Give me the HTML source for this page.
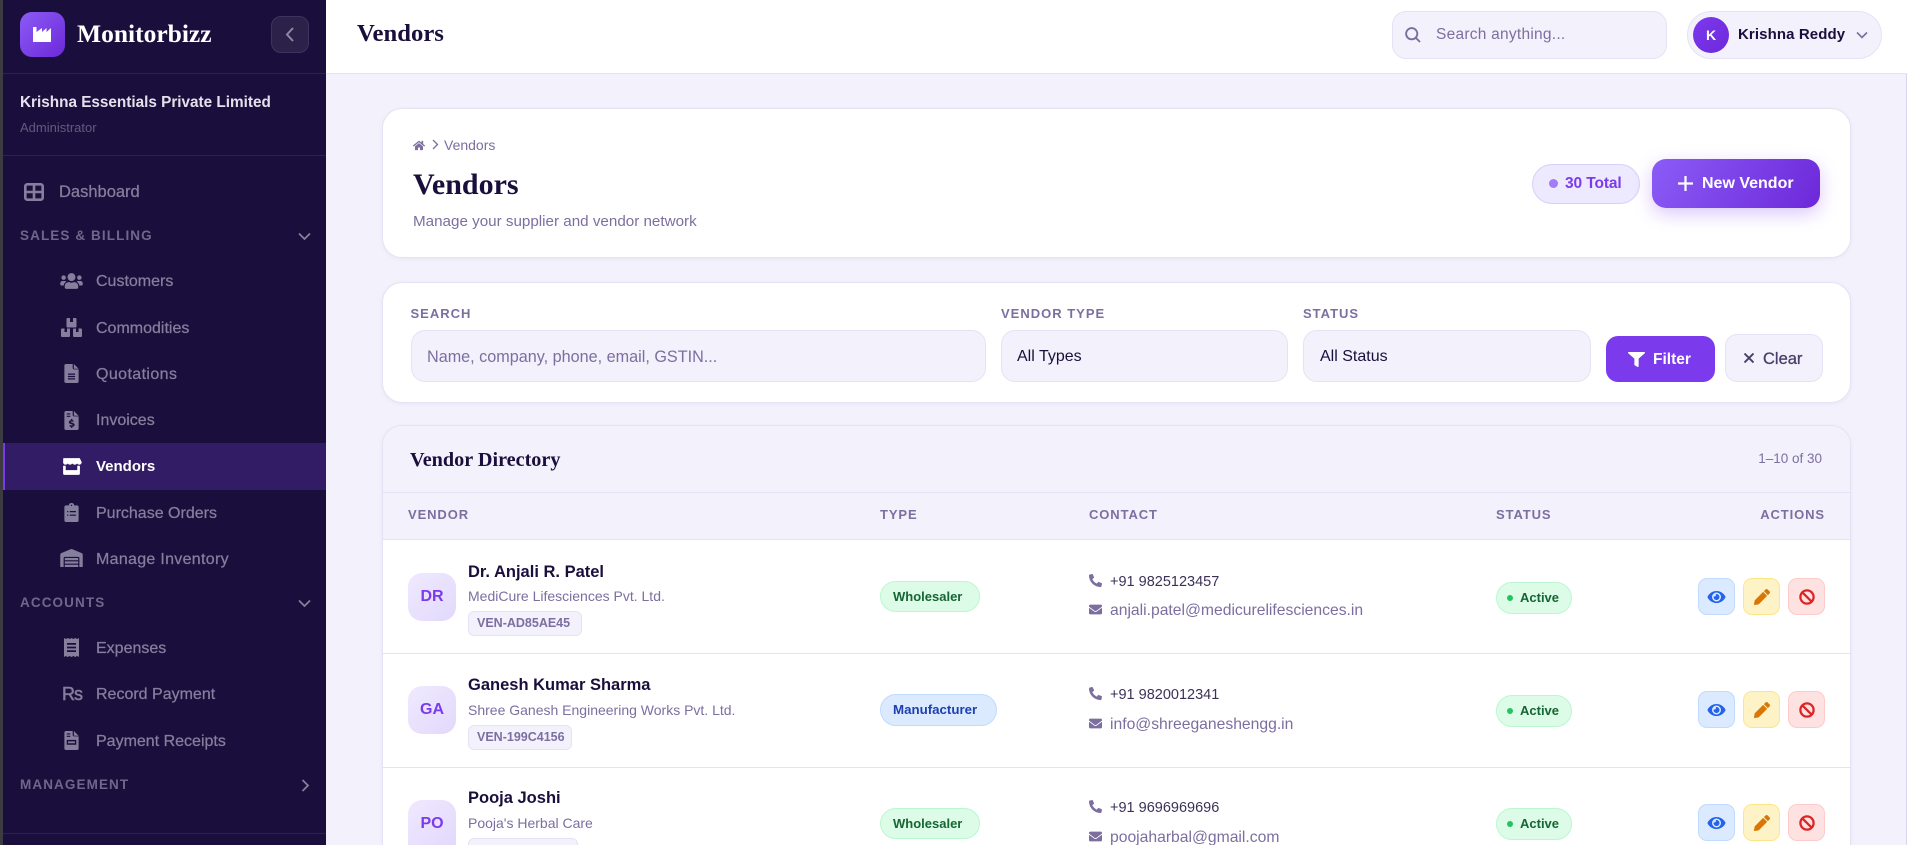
<!DOCTYPE html>
<html lang="en"><head><meta charset="utf-8"><title>Vendors</title>
<style>
*{box-sizing:border-box;margin:0;padding:0}
html,body{width:1907px;height:845px;overflow:hidden;background:#f3f1fb;font-family:"Liberation Sans",sans-serif;color:#1a0f3c}
#root{position:relative;width:1907px;height:845px;overflow:hidden;background:#f3f1fb}
.a{position:absolute}
.t{position:absolute;white-space:nowrap;line-height:20px;height:20px}
.s{font-family:"Liberation Serif",serif;font-weight:700;color:#1a0f3c}
.b{font-weight:700}
svg{position:absolute;display:block;fill:currentColor}
#side{position:absolute;left:0;top:0;width:326px;height:845px;background:#1a0f3c;overflow:hidden}
#edge{position:absolute;left:0;top:0;width:3px;height:845px;background:#3c3b40}
.hr{position:absolute;left:3px;width:323px;height:1px;background:#2c2250}
.nav{color:#857e9c;font-size:16px;left:96px;-webkit-text-stroke:.25px #857e9c}
.ic{color:#857e9c}
.sec{color:#6f678b;font-size:13.5px;font-weight:700;letter-spacing:1.1px;left:20px}
.card{position:absolute;left:382px;width:1469px;background:#fff;border:1px solid #e6e2f5;border-radius:20px;box-shadow:0 1px 4px rgba(90,70,170,.06)}
.lab{color:#7c6fa0;font-size:13px;font-weight:700;letter-spacing:1px}
.inp{position:absolute;top:330px;height:52px;background:#f3f1fb;border:1px solid #e6e2f5;border-radius:14px}
.av{position:absolute;left:408px;width:48px;height:48px;border-radius:14px;background:linear-gradient(135deg,#efe9fe,#e2d9fc);color:#7c3aed;font-weight:700;font-size:16px;text-align:center;line-height:48px}
.name{left:468px;font-size:16.5px;font-weight:700;color:#1a0f3c}
.co{left:468px;font-size:14px;color:#7c6fa0}
.code{position:absolute;left:468px;height:25px;background:#f3f1fb;border:1px solid #e6e2f5;border-radius:6px;color:#7c6fa0;font-size:12.5px;font-weight:700;line-height:23px;padding-left:8px;white-space:nowrap}
.pill{position:absolute;left:880px;height:31px;border-radius:16px;font-size:13px;line-height:29px;font-weight:700;white-space:nowrap;padding-left:12px}
.g{background:#dcfce7;border:1px solid #bbf7d0;color:#166534}
.bl{background:#dbeafe;border:1px solid #bfdbfe;color:#1e40af;font-size:13.3px}
.ph{left:1110px;font-size:14.5px;color:#3b3158}
.em{left:1110px;font-size:15.7px;color:#7c6fa0}
.ci{color:#7c6fa0}
.st{position:absolute;left:1496px;width:76px;height:32px;border-radius:16px;background:#dcfce7;border:1px solid #bbf7d0;color:#166534;font-size:13px;font-weight:700;line-height:30px;padding-left:23px}
.st:before{content:"";position:absolute;left:10px;top:12px;width:6px;height:6px;border-radius:50%;background:#22c55e}
.ab{position:absolute;width:37px;height:37px;border-radius:9px}
.v{left:1698px;background:#dbeafe;border:1px solid #bfdbfe;color:#2563eb}
.e{left:1743px;background:#fef3c7;border:1px solid #fde68a;color:#d97706}
.d{left:1788px;background:#fee2e2;border:1px solid #fecaca;color:#dc2626}
.th{color:#7c6fa0;font-size:13px;font-weight:700;letter-spacing:.9px;top:505px}
</style></head><body><div id="root">

<div id="side"></div><div id="edge"></div>
<div class="a" style="left:20px;top:12px;width:45px;height:45px;border-radius:12px;background:linear-gradient(135deg,#8b5cf6,#6d28d9)"></div>
<svg style="left:33px;top:26px;color:#fff" width="18" height="16" viewBox="0 0 18 16"><path d="M0 16V1h3.5v5L9 2v4l4.5-4v4L18 2v14z"/></svg>
<div class="t s" style="left:77px;top:24px;font-size:25.5px;color:#fff">Monitorbizz</div>
<div class="a" style="left:271px;top:16px;width:38px;height:37px;border-radius:10px;background:#2b2149;border:1px solid #3d3360"></div>
<svg style="left:284px;top:27px;fill:none;stroke:#8e87a5;stroke-width:2" width="12" height="15" viewBox="0 0 12 15"><path d="M9 1L3 7.5 9 14"/></svg>
<div class="hr" style="top:73px"></div>
<div class="t b" style="left:20px;top:92.500px;font-size:15.300px;color:#e4e1ec">Krishna Essentials Private Limited</div>
<div class="t" style="left:20px;top:118px;font-size:13px;color:#625a7e">Administrator</div>
<div class="hr" style="top:155px"></div>

<svg class="ic" style="left:24px;top:183px;fill:none;stroke:#857e9c;stroke-width:2.600" width="20" height="18" viewBox="0 0 20 18"><rect x="1.300" y="1.300" width="17.400" height="15.400" rx="2"/><path d="M1 9h18M10 1v16"/></svg>
<div class="t nav" style="left:59px;top:182px;font-size:16.5px">Dashboard</div>
<div class="t sec" style="top:226px">SALES &amp; BILLING</div>
<svg style="left:298px;top:232px;fill:none;stroke:#857e9c;stroke-width:1.8" width="13" height="9" viewBox="0 0 13 9"><path d="M1 1.500l5.500 5.500L12 1.500"/></svg>

<svg class="ic" style="left:60px;top:272px" width="23" height="18" viewBox="0 0 640 512"><path d="M96 224c35.3 0 64-28.7 64-64s-28.7-64-64-64-64 28.7-64 64 28.7 64 64 64zm448 0c35.3 0 64-28.7 64-64s-28.7-64-64-64-64 28.7-64 64 28.7 64 64 64zm32 32h-64c-17.6 0-33.5 7.1-45.1 18.6 40.3 22.1 68.9 62 75.1 109.4h66c17.7 0 32-14.3 32-32v-32c0-35.3-28.7-64-64-64zm-256 0c61.9 0 112-50.1 112-112S381.9 32 320 32 208 82.1 208 144s50.1 112 112 112zm76.8 32h-8.3c-20.8 10-43.9 16-68.5 16s-47.6-6-68.5-16h-8.3C179.6 288 128 339.6 128 403.2V432c0 26.5 21.5 48 48 48h288c26.5 0 48-21.5 48-48v-28.8c0-63.6-51.6-115.2-115.2-115.2zm-223.7-13.4C161.5 263.1 145.6 256 128 256H64c-35.3 0-64 28.7-64 64v32c0 17.7 14.3 32 32 32h65.9c6.3-47.4 34.9-87.3 75.2-109.4z"/></svg>
<div class="t nav" style="top:272px">Customers</div>

<svg class="ic" style="left:61px;top:318px" width="21" height="19" viewBox="0 0 21 19"><path fill-rule="evenodd" d="M6.500 0h8a1 1 0 0 1 1 1v7.500a1 1 0 0 1-1 1h-8a1 1 0 0 1-1-1V1a1 1 0 0 1 1-1zM9 0v4h3V0zM1 10.500h8v7.500a1 1 0 0 1-1 1H1a1 1 0 0 1-1-1v-6.500a1 1 0 0 1 1-1zM3.500 10.500v3.500h2.500v-3.500zM13 10.500h7a1 1 0 0 1 1 1V18a1 1 0 0 1-1 1h-7a1 1 0 0 1-1-1v-6.500a1 1 0 0 1 1-1zM15 10.500v3.500h2.500v-3.500z"/></svg>
<div class="t nav" style="top:319px">Commodities</div>

<svg class="ic" style="left:64px;top:364px" width="15" height="19" viewBox="0 0 384 512"><path fill-rule="evenodd" d="M48 0h176v112a32 32 0 0 0 32 32h128v320a48 48 0 0 1-48 48H48a48 48 0 0 1-48-48V48A48 48 0 0 1 48 0zM256 0l128 128H256zM96 256h192v32H96zM96 320h192v32H96zM96 384h192v32H96z"/></svg>
<div class="t nav" style="top:365px;letter-spacing:.4px">Quotations</div>

<svg class="ic" style="left:64px;top:411px" width="15" height="19" viewBox="0 0 384 512"><path fill-rule="evenodd" d="M48 0h176v112a32 32 0 0 0 32 32h128v320a48 48 0 0 1-48 48H48a48 48 0 0 1-48-48V48A48 48 0 0 1 48 0zM256 0l128 128H256zM64 64v30h96V64zM64 128v30h96v-30zM176 216v32c-40 8-56 26-56 52 0 30 24 44 70 56 28 8 36 14 36 22 0 12-40 14-84 0v36c18 8 30 10 34 12v30h40v-30c40-6 60-24 60-52 0-32-24-46-68-58-30-8-38-14-38-22 0-10 30-14 76-2v-36c-14-4-24-6-30-8v-32z"/></svg>
<div class="t nav" style="top:411px">Invoices</div>

<div class="a" style="left:3px;top:443px;width:323px;height:47px;background:#321c66"></div>
<div class="a" style="left:3px;top:443px;width:2px;height:47px;background:#7c3aed"></div>
<svg style="left:61px;top:457px;color:#fff" width="21" height="19" viewBox="0 0 640 512"><path d="M70 0h500l60 120c4 50-30 80-70 80-30 0-55-14-70-36-15 22-40 36-70 36s-55-14-76-36c-16 22-42 36-70 36s-55-14-70-36c-15 22-40 36-70 36-40 0-70-30-70-80z"/><path d="M64 232h80v136h352V232h80v232a48 48 0 0 1-48 48H112a48 48 0 0 1-48-48z"/></svg>
<div class="t nav" style="top:457px;color:#fff;font-weight:700;font-size:15px;-webkit-text-stroke:0">Vendors</div>

<svg class="ic" style="left:64px;top:503px" width="15" height="19" viewBox="0 0 384 512"><path fill-rule="evenodd" d="M120 64C120 28 150 0 192 0s72 28 72 64h72a48 48 0 0 1 48 48v352a48 48 0 0 1-48 48H48a48 48 0 0 1-48-48V112a48 48 0 0 1 48-48zM176 48v32h32V48zM72 216v32h32v-32zM144 216v32h168v-32zM72 312v32h32v-32zM144 312v32h168v-32z"/></svg>
<div class="t nav" style="top:504px">Purchase Orders</div>

<svg class="ic" style="left:60px;top:549px" width="23" height="18" viewBox="0 0 640 512"><path d="M504 352H136.4c-4.4 0-8 3.6-8 8l-.1 48c0 4.4 3.6 8 8 8H504c4.4 0 8-3.6 8-8v-48c0-4.4-3.6-8-8-8zm0 96H136.1c-4.4 0-8 3.6-8 8l-.1 48c0 4.4 3.6 8 8 8h368c4.4 0 8-3.6 8-8v-48c0-4.4-3.6-8-8-8zm0-192H136.6c-4.4 0-8 3.6-8 8l-.1 48c0 4.4 3.6 8 8 8H504c4.4 0 8-3.6 8-8v-48c0-4.4-3.6-8-8-8zm106.5-139L338.4 3.7a48.15 48.15 0 0 0-36.9 0L29.5 117C11.7 124.5 0 141.9 0 161.3V504c0 4.4 3.6 8 8 8h80c4.4 0 8-3.6 8-8V256c0-17.6 14.6-32 32.6-32h382.8c18 0 32.6 14.4 32.6 32v248c0 4.4 3.6 8 8 8h80c4.4 0 8-3.6 8-8V161.3c0-19.4-11.7-36.8-29.5-44.3z"/></svg>
<div class="t nav" style="top:550px;letter-spacing:.3px">Manage Inventory</div>

<div class="t sec" style="top:593px">ACCOUNTS</div>
<svg style="left:298px;top:599px;fill:none;stroke:#857e9c;stroke-width:1.8" width="13" height="9" viewBox="0 0 13 9"><path d="M1 1.500l5.500 5.500L12 1.500"/></svg>

<svg class="ic" style="left:64px;top:638px" width="15" height="19" viewBox="0 0 15 19"><path fill-rule="evenodd" d="M0 0l1.900 1 1.900-1 1.900 1L7.500 0l1.900 1 1.900-1 1.900 1L15 0v19l-1.900-1-1.900 1-1.900-1-1.900 1-1.900-1-1.900 1-1.900-1L0 19zM3 5v1.800h9V5zM3 8.600v1.800h9V8.600zM3 12.200V14h9v-1.800z"/></svg>
<div class="t nav" style="top:639px">Expenses</div>

<div class="t" style="left:62px;top:684px;font-size:18px;letter-spacing:-1px;color:#857e9c;-webkit-text-stroke:.5px #857e9c">Rs</div>
<div class="t nav" style="top:685px">Record Payment</div>

<svg class="ic" style="left:64px;top:731px" width="15" height="19" viewBox="0 0 384 512"><path fill-rule="evenodd" d="M48 0h176v112a32 32 0 0 0 32 32h128v320a48 48 0 0 1-48 48H48a48 48 0 0 1-48-48V48A48 48 0 0 1 48 0zM256 0l128 128H256zM64 64v30h96V64zM64 128v30h96v-30zM64 240v130h256V240zM100 280h184v50H100z"/></svg>
<div class="t nav" style="top:732px">Payment Receipts</div>

<div class="t sec" style="top:775px">MANAGEMENT</div>
<svg style="left:301px;top:779px;fill:none;stroke:#857e9c;stroke-width:1.8" width="9" height="13" viewBox="0 0 9 13"><path d="M1.500 1L7 6.500 1.500 12"/></svg>
<div class="hr" style="top:833px"></div>

<!-- top bar -->
<div class="a" style="left:326px;top:0;width:1581px;height:74px;background:#fff;border-bottom:1px solid #e6e2f5"></div>
<div class="a" style="left:1906px;top:74px;width:1px;height:771px;background:#d9d4f0"></div>
<div class="t s" style="left:357px;top:24px;font-size:24.700px">Vendors</div>
<div class="a" style="left:1392px;top:11px;width:275px;height:48px;background:#f3f1fb;border:1px solid #e6e2f5;border-radius:14px"></div>
<svg style="left:1405px;top:27px;fill:none;stroke:#7c6fa0;stroke-width:1.9" width="16" height="16" viewBox="0 0 16 16"><circle cx="6.700" cy="6.700" r="5.600"/><path d="M10.800 10.800L15 15"/></svg>
<div class="t" style="left:1436px;top:24.500px;font-size:15.500px;letter-spacing:.25px;color:#7c6fa0">Search anything...</div>
<div class="a" style="left:1687px;top:11px;width:195px;height:48px;background:#f3f1fb;border:1px solid #e6e2f5;border-radius:24px"></div>
<div class="a" style="left:1693px;top:17px;width:36px;height:36px;border-radius:50%;background:linear-gradient(135deg,#7c3aed,#6d28d9);color:#fff;text-align:center;line-height:36px;font-size:14px;font-weight:700">K</div>
<div class="t b" style="left:1738px;top:24.500px;font-size:15px;letter-spacing:.1px;color:#1a0f3c">Krishna Reddy</div>
<svg style="left:1856px;top:31px;fill:none;stroke:#7c6fa0;stroke-width:1.600" width="12" height="8" viewBox="0 0 12 8"><path d="M1 1.500l5 5 5-5"/></svg>

<!-- header card -->
<div class="card" style="top:108px;height:150px"></div>
<svg style="left:413px;top:140px;color:#7c6fa0" width="12" height="11" viewBox="0 0 576 512"><path d="M280.37 148.26L96 300.11V464a16 16 0 0 0 16 16l112.06-.29a16 16 0 0 0 15.92-16V368a16 16 0 0 1 16-16h64a16 16 0 0 1 16 16v95.64a16 16 0 0 0 16 16.05L464 480a16 16 0 0 0 16-16V300L295.67 148.26a12.19 12.19 0 0 0-15.3 0zM571.6 251.47L488 182.56V44.05a12 12 0 0 0-12-12h-56a12 12 0 0 0-12 12v72.61L318.47 43a48 48 0 0 0-61 0L4.34 251.47a12 12 0 0 0-1.6 16.9l25.5 31A12 12 0 0 0 45.15 301l235.22-193.74a12.19 12.19 0 0 1 15.3 0L530.9 301a12 12 0 0 0 16.9-1.6l25.5-31a12 12 0 0 0-1.7-16.93z"/></svg>
<svg style="left:432px;top:139px;fill:none;stroke:#7c6fa0;stroke-width:1.300" width="7" height="11" viewBox="0 0 7 11"><path d="M1 1l4.500 4.500L1 10"/></svg>
<div class="t" style="left:444px;top:135px;font-size:14px;color:#7c6fa0">Vendors</div>
<div class="t s" style="left:413px;top:175px;font-size:30px">Vendors</div>
<div class="t" style="left:413px;top:211.500px;font-size:15.200px;color:#7c6fa0">Manage your supplier and vendor network</div>

<div class="a" style="left:1532px;top:164px;width:108px;height:40px;border-radius:20px;background:#ede9fe;border:1px solid #d9cffb"></div>
<div class="a" style="left:1549px;top:179px;width:9px;height:9px;border-radius:50%;background:#a27cf5"></div>
<div class="t b" style="left:1565px;top:174px;font-size:15.500px;letter-spacing:-.1px;color:#7c3aed">30 Total</div>
<div class="a" style="left:1652px;top:159px;width:168px;height:49px;border-radius:14px;background:linear-gradient(120deg,#8b5cf6,#6d28d9);box-shadow:0 6px 18px rgba(124,58,237,.28)"></div>
<svg style="left:1678px;top:176px;fill:none;stroke:#fff;stroke-width:2.200" width="15" height="15" viewBox="0 0 15 15"><path d="M7.500 0v15M0 7.500h15"/></svg>
<div class="t b" style="left:1702px;top:173.500px;font-size:16px;color:#fff">New Vendor</div>

<!-- filter card -->
<div class="card" style="top:282px;height:121px"></div>
<div class="t lab" style="left:410.500px;top:304px">SEARCH</div>
<div class="inp" style="left:411px;width:575px"></div>
<div class="t" style="left:427px;top:347px;font-size:16.200px;color:#7c6fa0">Name, company, phone, email, GSTIN...</div>
<div class="t lab" style="left:1001px;top:304px">VENDOR TYPE</div>
<div class="inp" style="left:1001px;width:287px"></div>
<div class="t" style="left:1017px;top:347px;font-size:16px;color:#1a0f3c">All Types</div>
<div class="t lab" style="left:1303px;top:304px">STATUS</div>
<div class="inp" style="left:1303px;width:288px"></div>
<div class="t" style="left:1320px;top:347px;font-size:16px;color:#1a0f3c">All Status</div>
<div class="a" style="left:1606px;top:336px;width:109px;height:46px;border-radius:12px;background:#7c3aed"></div>
<svg style="left:1628px;top:352px;color:#fff" width="17" height="15" viewBox="0 0 512 512" preserveAspectRatio="none"><path d="M487.976 0H24.028C2.71 0-8.047 25.866 7.058 40.971L192 225.941V432c0 7.831 3.821 15.17 10.237 19.662l80 55.98C298.02 518.69 320 507.493 320 487.98V225.941l184.947-184.97C520.021 25.896 509.338 0 487.976 0z"/></svg>
<div class="t b" style="left:1653px;top:349.500px;font-size:15.500px;color:#fff">Filter</div>
<div class="a" style="left:1725px;top:334px;width:98px;height:48px;border-radius:12px;background:#f3f1fb;border:1px solid #e6e2f5"></div>
<svg style="left:1744px;top:353px;fill:none;stroke:#4a3f6b;stroke-width:1.900" width="10" height="10" viewBox="0 0 10 10"><path d="M.5.5l9 9M9.500.5l-9 9"/></svg>
<div class="t" style="left:1763px;top:348.500px;font-size:16.500px;color:#4a3f6b;-webkit-text-stroke:.3px #4a3f6b">Clear</div>

<!-- table card -->
<div class="card" style="top:425px;height:420px;overflow:hidden;border-radius:20px 20px 0 0;border-bottom:0">
  <div class="a" style="left:0;top:0;width:100%;height:114px;background:#f3f1fb;border-bottom:1px solid #e6e2f5"></div>
  <div class="a" style="left:0;top:66px;width:100%;height:1px;background:#e6e2f5"></div>
  <div class="a" style="left:0;top:227px;width:100%;height:1px;background:#e6e2f5"></div>
  <div class="a" style="left:0;top:341px;width:100%;height:1px;background:#e6e2f5"></div>
</div>
<div class="t s" style="left:410px;top:450px;font-size:20.200px">Vendor Directory</div>
<div class="t" style="right:85px;top:449px;font-size:13.500px;color:#7c6fa0">1–10 of 30</div>
<div class="t th" style="left:408px">VENDOR</div>
<div class="t th" style="left:880px">TYPE</div>
<div class="t th" style="left:1089px">CONTACT</div>
<div class="t th" style="left:1496px">STATUS</div>
<div class="t th" style="right:82px">ACTIONS</div>

<!-- row 1 -->
<div class="av" style="top:573px">DR</div>
<div class="t name" style="top:561.500px">Dr. Anjali R. Patel</div>
<div class="t co" style="top:586px">MediCure Lifesciences Pvt. Ltd.</div>
<div class="code" style="top:611px;width:114px">VEN-AD85AE45</div>
<div class="pill g" style="top:581px;width:100px">Wholesaler</div>
<svg class="ci" style="left:1089px;top:574px;transform:scaleX(-1)" width="13" height="13" viewBox="0 0 512 512"><path d="M493.4 24.6l-104-24c-11.3-2.6-22.9 3.3-27.5 13.9l-48 112c-4.2 9.8-1.4 21.3 6.9 28l60.6 49.6c-36 76.700-98.900 140.500-177.200 177.200l-49.600-60.600c-6.800-8.300-18.200-11.100-28-6.900l-112 48C3.900 366.500-2 378.100.6 389.400l24 104C27.100 504.200 36.700 512 48 512c256.100 0 464-207.500 464-464 0-11.200-7.700-20.900-18.600-23.400z"/></svg>
<div class="t ph" style="top:572px">+91 9825123457</div>
<svg class="ci" style="left:1089px;top:603px" width="13" height="13" viewBox="0 0 512 512"><path d="M502.300 190.800c3.900-3.100 9.700-.2 9.700 4.700V400c0 26.500-21.500 48-48 48H48c-26.500 0-48-21.500-48-48V195.600c0-5 5.700-7.800 9.700-4.700 22.400 17.400 52.100 39.500 154.100 113.600 21.100 15.400 56.700 47.800 92.200 47.600 35.700.3 72-32.800 92.300-47.600 102-74.100 131.600-96.300 154-113.700zM256 320c23.200.4 56.600-29.200 73.400-41.400 132.700-96.300 142.800-104.700 173.400-128.700 5.800-4.500 9.200-11.500 9.200-18.900v-19c0-26.500-21.500-48-48-48H48C21.500 64 0 85.500 0 112v19c0 7.400 3.400 14.300 9.200 18.900 30.600 23.900 40.700 32.400 173.400 128.700 16.800 12.200 50.200 41.800 73.400 41.400z"/></svg>
<div class="t em" style="top:601px">anjali.patel@medicurelifesciences.in</div>
<div class="st" style="top:582px">Active</div>
<div class="ab v" style="top:578px"><svg style="left:8px;top:10px" width="19" height="16" viewBox="0 0 576 512"><path d="M572.520 241.400C518.290 135.590 410.930 64 288 64S57.680 135.640 3.480 241.410a32.350 32.350 0 0 0 0 29.190C57.710 376.410 165.070 448 288 448s230.320-71.640 284.520-177.410a32.350 32.350 0 0 0 0-29.190zM288 400a144 144 0 1 1 144-144 143.930 143.930 0 0 1-144 144zm0-240a95.310 95.310 0 0 0-25.310 3.790 47.850 47.850 0 0 1-66.900 66.900A95.780 95.780 0 1 0 288 160z"/></svg></div>
<div class="ab e" style="top:578px"><svg style="left:10px;top:10px" width="16" height="16" viewBox="0 0 512 512"><path d="M497.900 142.100l-46.100 46.100c-4.700 4.700-12.300 4.700-17 0l-111-111c-4.700-4.700-4.700-12.300 0-17l46.100-46.100c18.700-18.700 49.100-18.700 67.900 0l60.100 60.100c18.800 18.700 18.800 49.100 0 67.900zM284.200 99.800L21.600 362.400.4 483.900c-2.900 16.400 11.400 30.600 27.800 27.800l121.500-21.300 262.600-262.600c4.700-4.700 4.700-12.300 0-17l-111-111c-4.800-4.700-12.400-4.700-17.100 0z"/></svg></div>
<div class="ab d" style="top:578px"><svg style="left:10px;top:10px;fill:none;stroke:currentColor;stroke-width:2.300" width="16" height="16" viewBox="0 0 16 16"><circle cx="8" cy="8" r="6.600"/><path d="M3.400 3.400l9.200 9.200"/></svg></div>

<!-- row 2 -->
<div class="av" style="top:686px">GA</div>
<div class="t name" style="top:674.500px">Ganesh Kumar Sharma</div>
<div class="t co" style="top:700px">Shree Ganesh Engineering Works Pvt. Ltd.</div>
<div class="code" style="top:725px;width:104px">VEN-199C4156</div>
<div class="pill bl" style="top:694px;width:117px;height:32px;line-height:30px">Manufacturer</div>
<svg class="ci" style="left:1089px;top:687px;transform:scaleX(-1)" width="13" height="13" viewBox="0 0 512 512"><path d="M493.4 24.6l-104-24c-11.3-2.6-22.9 3.3-27.5 13.9l-48 112c-4.2 9.8-1.4 21.3 6.9 28l60.6 49.6c-36 76.700-98.900 140.500-177.200 177.200l-49.600-60.600c-6.800-8.300-18.200-11.100-28-6.900l-112 48C3.900 366.500-2 378.100.6 389.400l24 104C27.100 504.200 36.700 512 48 512c256.100 0 464-207.500 464-464 0-11.200-7.700-20.900-18.600-23.400z"/></svg>
<div class="t ph" style="top:685px">+91 9820012341</div>
<svg class="ci" style="left:1089px;top:717px" width="13" height="13" viewBox="0 0 512 512"><path d="M502.300 190.800c3.900-3.100 9.700-.2 9.700 4.700V400c0 26.500-21.500 48-48 48H48c-26.500 0-48-21.500-48-48V195.600c0-5 5.700-7.800 9.700-4.700 22.400 17.400 52.100 39.500 154.100 113.600 21.100 15.400 56.700 47.800 92.200 47.600 35.700.3 72-32.800 92.300-47.600 102-74.100 131.600-96.300 154-113.700zM256 320c23.200.4 56.600-29.200 73.400-41.400 132.700-96.300 142.800-104.700 173.400-128.700 5.800-4.500 9.200-11.500 9.200-18.900v-19c0-26.500-21.500-48-48-48H48C21.500 64 0 85.500 0 112v19c0 7.400 3.400 14.300 9.200 18.900 30.600 23.900 40.700 32.400 173.400 128.700 16.800 12.200 50.200 41.800 73.400 41.400z"/></svg>
<div class="t em" style="top:715px">info@shreeganeshengg.in</div>
<div class="st" style="top:695px">Active</div>
<div class="ab v" style="top:691px"><svg style="left:8px;top:10px" width="19" height="16" viewBox="0 0 576 512"><path d="M572.520 241.400C518.290 135.590 410.930 64 288 64S57.680 135.640 3.480 241.410a32.350 32.350 0 0 0 0 29.190C57.710 376.410 165.070 448 288 448s230.320-71.640 284.520-177.410a32.350 32.350 0 0 0 0-29.190zM288 400a144 144 0 1 1 144-144 143.930 143.930 0 0 1-144 144zm0-240a95.310 95.310 0 0 0-25.310 3.790 47.850 47.850 0 0 1-66.900 66.900A95.780 95.780 0 1 0 288 160z"/></svg></div>
<div class="ab e" style="top:691px"><svg style="left:10px;top:10px" width="16" height="16" viewBox="0 0 512 512"><path d="M497.900 142.100l-46.100 46.100c-4.700 4.700-12.300 4.700-17 0l-111-111c-4.700-4.700-4.700-12.300 0-17l46.100-46.100c18.700-18.700 49.100-18.700 67.900 0l60.100 60.100c18.800 18.700 18.800 49.100 0 67.900zM284.200 99.800L21.600 362.400.4 483.900c-2.900 16.400 11.400 30.600 27.800 27.800l121.500-21.300 262.600-262.600c4.700-4.700 4.700-12.300 0-17l-111-111c-4.800-4.700-12.400-4.700-17.100 0z"/></svg></div>
<div class="ab d" style="top:691px"><svg style="left:10px;top:10px;fill:none;stroke:currentColor;stroke-width:2.300" width="16" height="16" viewBox="0 0 16 16"><circle cx="8" cy="8" r="6.600"/><path d="M3.400 3.400l9.200 9.200"/></svg></div>

<!-- row 3 -->
<div class="av" style="top:800px;height:45px;border-radius:14px 14px 0 0">PO</div>
<div class="t name" style="top:787.500px">Pooja Joshi</div>
<div class="t co" style="top:813px">Pooja's Herbal Care</div>
<div class="code" style="top:838px;width:110px;height:7px;border-bottom:0;border-radius:6px 6px 0 0"></div>
<div class="pill g" style="top:808px;width:100px">Wholesaler</div>
<svg class="ci" style="left:1089px;top:800px;transform:scaleX(-1)" width="13" height="13" viewBox="0 0 512 512"><path d="M493.4 24.6l-104-24c-11.3-2.6-22.9 3.3-27.5 13.9l-48 112c-4.2 9.8-1.4 21.3 6.9 28l60.6 49.6c-36 76.700-98.900 140.500-177.200 177.200l-49.600-60.600c-6.800-8.300-18.200-11.100-28-6.900l-112 48C3.900 366.500-2 378.100.6 389.400l24 104C27.100 504.200 36.700 512 48 512c256.100 0 464-207.500 464-464 0-11.200-7.700-20.900-18.600-23.400z"/></svg>
<div class="t ph" style="top:798px">+91 9696969696</div>
<svg class="ci" style="left:1089px;top:830px" width="13" height="13" viewBox="0 0 512 512"><path d="M502.300 190.800c3.900-3.100 9.700-.2 9.700 4.700V400c0 26.500-21.500 48-48 48H48c-26.500 0-48-21.500-48-48V195.600c0-5 5.700-7.800 9.700-4.700 22.400 17.400 52.100 39.500 154.100 113.600 21.100 15.400 56.700 47.800 92.200 47.600 35.700.3 72-32.800 92.300-47.600 102-74.100 131.600-96.300 154-113.700zM256 320c23.200.4 56.600-29.200 73.400-41.400 132.700-96.300 142.800-104.700 173.400-128.700 5.800-4.500 9.200-11.500 9.200-18.900v-19c0-26.500-21.500-48-48-48H48C21.500 64 0 85.500 0 112v19c0 7.400 3.400 14.300 9.200 18.900 30.600 23.900 40.700 32.400 173.400 128.700 16.800 12.200 50.200 41.800 73.400 41.400z"/></svg>
<div class="t em" style="top:828px;height:17px;overflow:hidden">poojaharbal@gmail.com</div>
<div class="st" style="top:808px">Active</div>
<div class="ab v" style="top:804px"><svg style="left:8px;top:10px" width="19" height="16" viewBox="0 0 576 512"><path d="M572.520 241.400C518.290 135.590 410.930 64 288 64S57.680 135.640 3.480 241.410a32.350 32.350 0 0 0 0 29.190C57.710 376.410 165.070 448 288 448s230.320-71.640 284.520-177.410a32.350 32.350 0 0 0 0-29.190zM288 400a144 144 0 1 1 144-144 143.930 143.930 0 0 1-144 144zm0-240a95.310 95.310 0 0 0-25.310 3.790 47.850 47.850 0 0 1-66.900 66.900A95.780 95.780 0 1 0 288 160z"/></svg></div>
<div class="ab e" style="top:804px"><svg style="left:10px;top:10px" width="16" height="16" viewBox="0 0 512 512"><path d="M497.900 142.100l-46.100 46.100c-4.700 4.700-12.300 4.700-17 0l-111-111c-4.700-4.700-4.700-12.300 0-17l46.100-46.100c18.700-18.700 49.100-18.700 67.900 0l60.100 60.100c18.800 18.700 18.800 49.100 0 67.900zM284.200 99.800L21.600 362.400.4 483.900c-2.900 16.400 11.400 30.600 27.800 27.800l121.500-21.300 262.600-262.600c4.700-4.700 4.700-12.300 0-17l-111-111c-4.800-4.700-12.400-4.700-17.100 0z"/></svg></div>
<div class="ab d" style="top:804px"><svg style="left:10px;top:10px;fill:none;stroke:currentColor;stroke-width:2.300" width="16" height="16" viewBox="0 0 16 16"><circle cx="8" cy="8" r="6.600"/><path d="M3.400 3.400l9.200 9.200"/></svg></div>

</div></body></html>
